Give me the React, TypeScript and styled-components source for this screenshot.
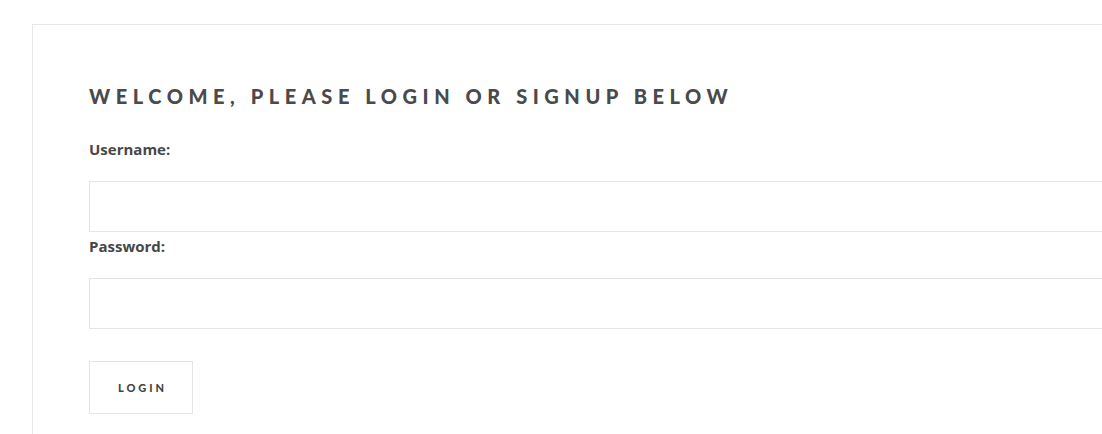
import styled, { createGlobalStyle } from 'styled-components';

const GlobalStyle = createGlobalStyle`
  html, body {
    margin: 0;
    padding: 0;
    background: #ffffff;
    overflow: hidden;
  }
  * {
    box-sizing: border-box;
  }
`;

export default function App() {
  return (
    <>
      <GlobalStyle />
      <Page>
        <Card>
          <Title>Welcome, please login or signup below</Title>
          <Form onSubmit={(e) => e.preventDefault()}>
            <Label htmlFor='username'>Username:</Label>
            <Input id='username' type='text' />
            <Label htmlFor='password'>Password:</Label>
            <Input id='password' type='password' />
            <LoginBtn type='submit'>Login</LoginBtn>
          </Form>
        </Card>
      </Page>
    </>
  );
}

const Page = styled.div`
  width: 1102px;
  height: 434px;
  padding: 24px 0 0 32px;
  overflow: hidden;
`;

const Card = styled.div`
  width: 1140px;
  min-height: 500px;
  border: 1px solid #e8e8e8;
  background-color: #ffffff;
  padding: 59px 56px 40px 56px;
`;

const Title = styled.h1`
  margin: 0 0 31px 0;
  font-family: Lato, 'Open Sans', sans-serif;
  font-size: 20px;
  line-height: 24px;
  font-weight: 900;
  text-transform: uppercase;
  letter-spacing: 5.55px;
  color: #4a4a4a;
`;

const Form = styled.form`
  display: flex;
  flex-direction: column;
  align-items: flex-start;
`;

const Label = styled.label`
  display: block;
  margin: 4px 0 22px 0;
  font-family: 'Open Sans', 'Noto Sans', sans-serif;
  font-size: 15px;
  line-height: 20px;
  font-weight: 700;
  color: #474747;
  &:first-child {
    margin-top: 0;
  }
`;

const Input = styled.input`
  width: 100%;
  height: 51px;
  border: 1px solid #e5e5e5;
  background-color: #ffffff;
  padding: 0 16px;
  outline: none;
  font-family: 'Open Sans', sans-serif;
  font-size: 15px;
`;

const LoginBtn = styled.button`
  margin-top: 32px;
  width: 104px;
  height: 53px;
  border: 1px solid #e5e5e5;
  background-color: #ffffff;
  font-family: Lato, 'Open Sans', sans-serif;
  font-size: 11px;
  font-weight: 900;
  text-transform: uppercase;
  letter-spacing: 3px;
  color: #444444;
  padding: 0 0 0 3px;
  cursor: pointer;
`;
